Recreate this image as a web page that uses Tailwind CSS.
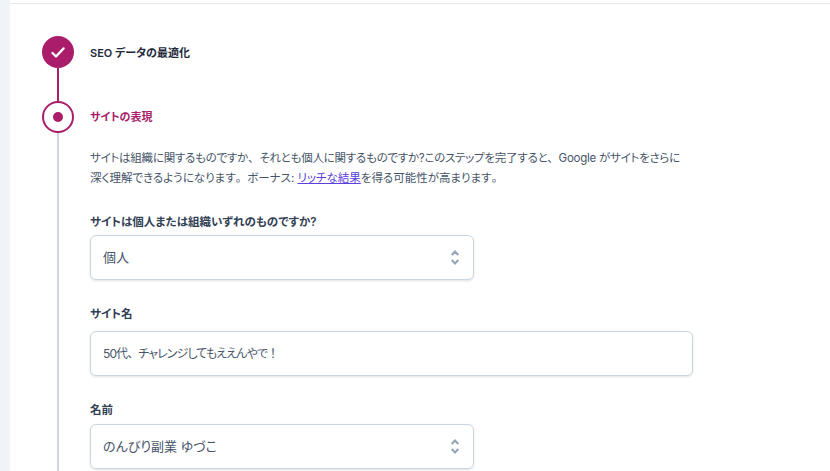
<!DOCTYPE html>
<html lang="ja">
<head>
<meta charset="UTF-8">
<title>SEO</title>
<script src="https://cdn.jsdelivr.net/npm/@tailwindcss/browser@4"></script>
</head>
<body class="bg-[#f0f3f8] overflow-hidden font-['Inter','Noto_Sans_CJK_JP',sans-serif] text-[#475569] text-[13px] [font-feature-settings:'palt']">
<div class="ml-[10px] h-[471px] bg-white pt-[3px] overflow-hidden">
  <div class="border-t border-[#e5e7eb] pl-[32px] pt-[32px]">
    <div class="flex gap-4 h-[65px]">
      <div class="flex flex-col items-center w-8">
        <div class="w-8 h-8 rounded-full bg-[#a91d6a] flex items-center justify-center shrink-0">
          <svg width="14" height="11" viewBox="0 0 14 11" fill="none" stroke="white" stroke-width="2.4" stroke-linecap="round" stroke-linejoin="round"><path d="M1.5 6l3.5 3.5 7.5-8"/></svg>
        </div>
        <div class="w-0.5 flex-1 bg-[#a91d6a]"></div>
      </div>
      <p class="text-[11px] font-semibold text-[#1e293b] leading-[34px]">SEO データの最適化</p>
    </div>
    <div class="flex gap-4">
      <div class="flex flex-col items-center w-8">
        <div class="w-8 h-8 rounded-full border-2 border-[#a91d6a] bg-white flex items-center justify-center shrink-0">
          <div class="w-2.5 h-2.5 rounded-full bg-[#a91d6a]"></div>
        </div>
        <div class="w-0.5 h-[400px] bg-[#cbd5e1]"></div>
      </div>
      <div class="w-[603px]">
        <p class="text-[11px] font-semibold text-[#a91d6a] leading-8">サイトの表現</p>
        <p class="mt-[15px] text-[11.5px] leading-[20px] whitespace-nowrap"><span class="tracking-[-0.25px]">サイトは組織に関するものですか<span class="[font-feature-settings:normal]">、</span>それとも個人に関するものですか?このステップを完了すると<span class="[font-feature-settings:normal]">、</span>Google がサイトをさらに</span><br>深く理解できるようになります<span class="[font-feature-settings:normal]">。</span>ボーナス: <span class="text-[#5b3fe0] underline">リッチな結果</span>を得る可能性が高まります<span class="[font-feature-settings:normal]">。</span></p>
        <label class="block mt-[24px] text-[11.5px] font-semibold text-[#334155] leading-5">サイトは個人または組織いずれのものですか?</label>
        <div class="mt-[3px] w-[384px] h-[45px] border border-[#cbd5e1] rounded-md shadow-sm flex items-center justify-between pl-3 pr-[14px]">個人
          <svg width="8" height="15" viewBox="0 0 8 15" fill="none" stroke="#94a3b8" stroke-width="2"><path d="M.7 5L4 1.5 7.3 5M.7 10L4 13.5 7.3 10"/></svg>
        </div>
        <label class="block mt-[24px] text-[11.5px] font-semibold text-[#334155] leading-5">サイト名</label>
        <div class="mt-[7px] h-[45px] border border-[#cbd5e1] rounded-md shadow-sm flex items-center px-3 text-xs tracking-[-0.9px]">50代<span class="[font-feature-settings:normal]">、</span>チャレンジしてもええんやで<span class="[font-feature-settings:normal]">！</span></div>
        <label class="block mt-[24px] text-[11.5px] font-semibold text-[#334155] leading-5">名前</label>
        <div class="mt-[4px] w-[384px] h-[45px] border border-[#cbd5e1] rounded-md shadow-sm flex items-center justify-between pl-3 pr-[14px]">のんびり副業 ゆづこ
          <svg width="8" height="15" viewBox="0 0 8 15" fill="none" stroke="#94a3b8" stroke-width="2"><path d="M.7 5L4 1.5 7.3 5M.7 10L4 13.5 7.3 10"/></svg>
        </div>
      </div>
    </div>
  </div>
</div>
</body>
</html>
